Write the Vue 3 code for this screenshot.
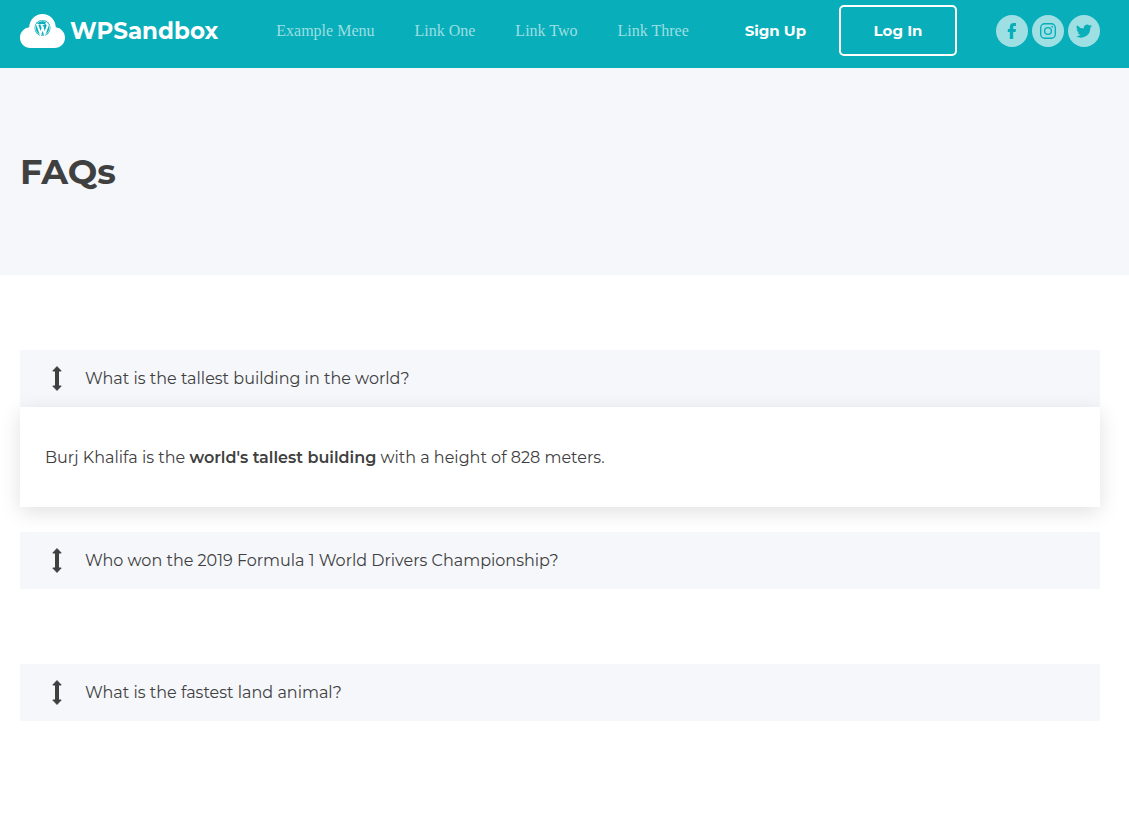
<script setup>
import { ref } from 'vue'

const menu = ['Example Menu', 'Link One', 'Link Two', 'Link Three']
const open = ref([true, false, false])
const questions = [
  'What is the tallest building in the world?',
  'Who won the 2019 Formula 1 World Drivers Championship?',
  'What is the fastest land animal?',
]
const toggle = (i) => { open.value[i] = !open.value[i] }
</script>

<template>
  <header class="bar">
    <a class="logo" href="#" aria-label="WPSandbox home">
      <svg class="cloud" viewBox="0 0 45 34" aria-hidden="true">
        <path fill="#fff" d="M10.500 34C4.500 34 0 29.500 0 23.700C0 18.200 4 13.800 9.200 13.200C9.500 5.800 15.300 0 22.500 0C29.700 0 35.500 5.800 35.800 13.200C41 13.800 45 18.200 45 23.700C45 29.500 40.500 34 34.500 34Z" />
        <circle cx="22.500" cy="14" r="8" fill="#08aeb9" />
        <circle cx="22.500" cy="14" r="7.100" fill="none" stroke="#fff" stroke-width=".6" />
        <path fill="none" stroke="#fff" stroke-width="2" d="M17.200 10.500L20.500 19.800L23.200 12.500M21.400 10.500L24.700 19.800L27.700 11.500L26 8.500" />
        <path fill="none" stroke="#fff" stroke-width=".9" d="M16 10.500H19.500M20.300 10.500H24.500" />
      </svg>
      <span class="brand">WPSandbox</span>
    </a>
    <nav class="menu" aria-label="Main">
      <a v-for="item in menu" :key="item" href="#">{{ item }}</a>
    </nav>
    <div class="account">
      <a class="signup" href="#">Sign Up</a>
      <a class="login" href="#">Log In</a>
    </div>
    <div class="social">
      <a href="#" aria-label="Facebook">
        <svg viewBox="0 0 32 32" aria-hidden="true">
          <path fill="#08aeb9" d="M13.800 24V17H11.800V14H13.800V12.200C13.800 9.500 15.300 8 17.800 8H20V11H18.500C17.600 11 17.200 11.400 17.200 12.200V14H20L19.600 17H17.200V24Z" />
        </svg>
      </a>
      <a href="#" aria-label="Instagram">
        <svg viewBox="0 0 32 32" aria-hidden="true" fill="none" stroke="#08aeb9">
          <rect x="8.700" y="8.700" width="14.600" height="14.600" rx="4" stroke-width="1.400" />
          <circle cx="16" cy="16" r="3.400" stroke-width="1.400" />
          <circle cx="20.300" cy="11.700" r=".9" fill="#08aeb9" stroke="none" />
        </svg>
      </a>
      <a href="#" aria-label="Twitter">
        <svg viewBox="0 0 32 32" aria-hidden="true">
          <path fill="#08aeb9" d="M24 11.100a6.600 6.600 0 0 1-1.900.5a3.300 3.300 0 0 0 1.400-1.800a6.600 6.600 0 0 1-2.100.8a3.300 3.300 0 0 0-5.600 3a9.300 9.300 0 0 1-6.700-3.400a3.300 3.300 0 0 0 1 4.400a3.300 3.300 0 0 1-1.500-.4a3.300 3.300 0 0 0 2.600 3.200a3.300 3.300 0 0 1-1.500.1a3.300 3.300 0 0 0 3.100 2.300A6.600 6.600 0 0 1 8 21.100a9.300 9.300 0 0 0 14.300-8.300a6.700 6.700 0 0 0 1.700-1.700Z" />
        </svg>
      </a>
    </div>
  </header>
  <section class="hero">
    <h1>FAQs</h1>
  </section>
  <main class="faqs">
    <section v-for="(q, i) in questions" :key="q" class="faq" :class="{ spaced: i === 1 }">
      <button class="question" type="button" :aria-expanded="open[i]" @click="toggle(i)">
        <svg class="arrow" viewBox="0 0 10 25" aria-hidden="true">
          <path fill="#404040" stroke="#404040" stroke-linejoin="round" d="M5 .6L9.200 5H6.500V20H9.200L5 24.400L.8 20H3.500V5H.8Z" />
        </svg>
        <span>{{ q }}</span>
      </button>
      <div v-if="i === 0 && open[0]" class="answer">
        Burj Khalifa is the <strong>world's tallest building</strong> with a height of 828 meters.
      </div>
    </section>
  </main>
</template>

<style>
body { background: #fff; }
</style>

<style scoped>
.bar, .hero, .faqs {
  box-sizing: border-box;
  font-family: Montserrat, Inter, "Liberation Sans", sans-serif;
  color: #404040;
}
.bar {
  display: flex;
  align-items: center;
  height: 68px;
  padding: 0 29px 7px 20px;
  background: #08aeb9;
}
a { text-decoration: none; color: #fff; }
.logo { display: flex; align-items: center; gap: 5px; }
.cloud { width: 45px; height: 34px; }
.brand { font-size: 23px; line-height: 34px; font-weight: 700; }
.menu {
  display: flex;
  gap: 40px;
  margin-left: 58px;
  font: 16px/24px "Liberation Serif", serif;
}
.menu a { color: #9ddfe3; white-space: nowrap; }
.account {
  display: flex;
  align-items: center;
  gap: 33px;
  margin-left: auto;
  font-size: 15px;
  line-height: 23px;
  font-weight: 700;
  white-space: nowrap;
}
.login {
  box-sizing: border-box;
  width: 118px;
  padding: 12px 0;
  border: 2px solid #fff;
  border-radius: 5px;
  text-align: center;
}
.social { display: flex; gap: 4px; margin-left: 39px; }
.social a { width: 32px; height: 32px; border-radius: 50%; background: #9ddfe3; }
.social svg { display: block; width: 32px; height: 32px; }
.hero { padding: 80px 20px 79px; background: #f5f7fb; }
h1 { margin: 0; font-size: 35px; line-height: 48px; font-weight: 700; }
.faqs { padding: 75px 29px 75px 20px; }
.faq + .faq { margin-top: 75px; }
.faq.spaced { margin-top: 25px; }
.question {
  display: flex;
  align-items: center;
  gap: 23px;
  width: 100%;
  padding: 15px 32px;
  border: 0;
  background: #f5f7fb;
  color: #404040;
  font: 400 16px/27px Montserrat, Inter, "Liberation Sans", sans-serif;
  text-align: left;
  cursor: pointer;
}
.arrow { width: 10px; height: 25px; }
.answer {
  padding: 37px 25px 36px;
  background: #fff;
  box-shadow: 0 5px 20px rgba(0, 0, 0, .12);
  font-size: 16px;
  line-height: 27px;
  font-weight: 400;
}
strong { font-weight: 600; }
</style>
